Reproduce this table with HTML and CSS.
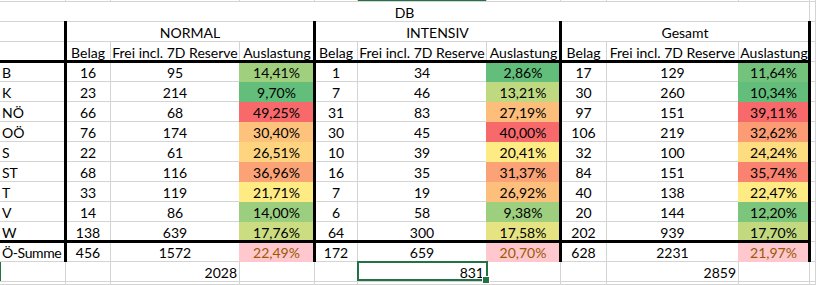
FILE: index.html
```html
<!DOCTYPE html>
<html lang="de">
<head>
<meta charset="utf-8">
<title>DB Auslastung</title>
<link rel="stylesheet" href="styles.css">
</head>
<body>
<div class="sheet">
  <div class="cells">
    <!-- row 0 (partial) -->
    <div class="c"></div><div class="c"></div><div class="c"></div><div class="c"></div><div class="c"></div><div class="c hc"></div><div class="c"></div><div class="c"></div><div class="c"></div><div class="c"></div><div class="c"></div>
    <!-- DB -->
    <div class="c s10">DB</div><div class="c"></div>
    <!-- groups -->
    <div class="c"></div><div class="c s3">NORMAL</div><div class="c s3">INTENSIV</div><div class="c s3">Gesamt</div><div class="c"></div>
    <!-- header -->
    <div class="c"></div>
    <div class="c">Belag</div><div class="c">Frei incl. 7D Reserve</div><div class="c">Auslastung</div>
    <div class="c">Belag</div><div class="c">Frei incl. 7D Reserve</div><div class="c">Auslastung</div>
    <div class="c">Belag</div><div class="c">Frei incl. 7D Reserve</div><div class="c">Auslastung</div>
    <div class="c"></div>

    <div class="c l">B</div>
    <div class="c">16</div><div class="c">95</div><div class="c f" style="background:#A0D07E">14,41%</div>
    <div class="c">1</div><div class="c">34</div><div class="c f" style="background:#63BE7B">2,86%</div>
    <div class="c">17</div><div class="c">129</div><div class="c f" style="background:#74C37C">11,64%</div>
    <div class="c"></div>

    <div class="c l">K</div>
    <div class="c">23</div><div class="c">214</div><div class="c f" style="background:#63BE7B">9,70%</div>
    <div class="c">7</div><div class="c">46</div><div class="c f" style="background:#BFD980">13,21%</div>
    <div class="c">30</div><div class="c">260</div><div class="c f" style="background:#63BE7B">10,34%</div>
    <div class="c"></div>

    <div class="c l">NÖ</div>
    <div class="c">66</div><div class="c">68</div><div class="c f" style="background:#F8696B">49,25%</div>
    <div class="c">31</div><div class="c">83</div><div class="c f" style="background:#FDBE7B">27,19%</div>
    <div class="c">97</div><div class="c">151</div><div class="c f" style="background:#F8696B">39,11%</div>
    <div class="c"></div>

    <div class="c l">OÖ</div>
    <div class="c">76</div><div class="c">174</div><div class="c f" style="background:#FDC27C">30,40%</div>
    <div class="c">30</div><div class="c">45</div><div class="c f" style="background:#F8696B">40,00%</div>
    <div class="c">106</div><div class="c">219</div><div class="c f" style="background:#FB9C75">32,62%</div>
    <div class="c"></div>

    <div class="c l">S</div>
    <div class="c">22</div><div class="c">61</div><div class="c f" style="background:#FED47F">26,51%</div>
    <div class="c">10</div><div class="c">39</div><div class="c f" style="background:#FFEB84">20,41%</div>
    <div class="c">32</div><div class="c">100</div><div class="c f" style="background:#FEDD81">24,24%</div>
    <div class="c"></div>

    <div class="c l">ST</div>
    <div class="c">68</div><div class="c">116</div><div class="c f" style="background:#FBA376">36,96%</div>
    <div class="c">16</div><div class="c">35</div><div class="c f" style="background:#FBA276">31,37%</div>
    <div class="c">84</div><div class="c">151</div><div class="c f" style="background:#F98370">35,74%</div>
    <div class="c"></div>

    <div class="c l">T</div>
    <div class="c">33</div><div class="c">119</div><div class="c f" style="background:#FFEB84">21,71%</div>
    <div class="c">7</div><div class="c">19</div><div class="c f" style="background:#FDC07C">26,92%</div>
    <div class="c">40</div><div class="c">138</div><div class="c f" style="background:#FFEB84">22,47%</div>
    <div class="c"></div>

    <div class="c l">V</div>
    <div class="c">14</div><div class="c">86</div><div class="c f" style="background:#9BCE7E">14,00%</div>
    <div class="c">6</div><div class="c">58</div><div class="c f" style="background:#9DCF7E">9,38%</div>
    <div class="c">20</div><div class="c">144</div><div class="c f" style="background:#7BC57C">12,20%</div>
    <div class="c"></div>

    <div class="c l">W</div>
    <div class="c">138</div><div class="c">639</div><div class="c f" style="background:#CCDC81">17,76%</div>
    <div class="c">64</div><div class="c">300</div><div class="c f" style="background:#E6E482">17,58%</div>
    <div class="c">202</div><div class="c">939</div><div class="c f" style="background:#C2D980">17,70%</div>
    <div class="c"></div>

    <div class="c l tight">Ö-Summe</div>
    <div class="c">456</div><div class="c">1572</div><div class="c f sum">22,49%</div>
    <div class="c">172</div><div class="c">659</div><div class="c f sum">20,70%</div>
    <div class="c">628</div><div class="c">2231</div><div class="c f sum">21,97%</div>
    <div class="c"></div>

    <div class="c hr"></div>
    <div class="c"></div><div class="c r">2028</div><div class="c"></div>
    <div class="c"></div><div class="c r">831</div><div class="c"></div>
    <div class="c"></div><div class="c r">2859</div><div class="c"></div>
    <div class="c"></div>

    <div class="c"></div><div class="c"></div><div class="c"></div><div class="c"></div><div class="c"></div><div class="c"></div><div class="c"></div><div class="c"></div><div class="c"></div><div class="c"></div><div class="c"></div>
  </div>
  <div class="lines">
    <div class="v v1"></div>
    <div class="v v2"></div>
    <div class="v v3"></div>
    <div class="v v4"></div>
    <div class="h h1"></div>
    <div class="h h2"></div>
    <div class="sel"></div>
  </div>
</div>
</body>
</html>
```
FILE: styles.css
```css
* {
  box-sizing: border-box;
  margin: 0;
  padding: 0;
}

html,
body {
  background: #ffffff;
  overflow: hidden;
}

body {
  width: 816px;
  height: 285px;
  font-family: Lato, "Liberation Sans", sans-serif;
  font-size: 14px;
  color: #000000;
}

.sheet {
  display: grid;
}

.cells,
.lines {
  grid-area: 1 / 1;
  display: grid;
  grid-template-columns: 66px 45px 129px 75px 43px 129px 74px 46px 132px 71px 1fr;
  grid-template-rows: 2px repeat(14, 20px) 3px;
}

.lines {
  pointer-events: none;
}

.c {
  border-right: 1px solid #d4d4d4;
  border-bottom: 1px solid #d4d4d4;
  display: flex;
  align-items: flex-end;
  justify-content: center;
  line-height: 17px;
  white-space: nowrap;
  min-width: 0;
}

.l {
  justify-content: flex-start;
  padding-left: 2px;
}

.tight {
  letter-spacing: -0.4px;
}

.r {
  justify-content: flex-end;
  padding-right: 2px;
}

.s3 {
  grid-column: span 3;
}

.s10 {
  grid-column: span 10;
}

.f {
  margin-left: -1px;
  border-right-color: transparent;
  border-bottom-color: transparent;
}

.sum {
  background: #ffc7ce;
  color: #9c5700;
}

.hc {
  background: #217346;
}

.hr {
  box-shadow: inset 1px 0 #217346;
}

.v {
  grid-row: 3 / 15;
  justify-self: start;
  width: 3px;
  margin-left: -2px;
  margin-top: -1px;
  background: #000000;
}

.v1 { grid-column: 2; }
.v2 { grid-column: 5; }
.v3 { grid-column: 8; }
.v4 { grid-column: 11; }

.h {
  grid-column: 1 / 11;
  align-self: start;
  height: 3px;
  margin-top: -2px;
  margin-right: -1px;
  background: #000000;
}

.h1 { grid-row: 5; }
.h2 { grid-row: 14; }

.sel {
  grid-column: 6;
  grid-row: 15;
  margin: -1px -1px 1px -1px;
  border: 2px solid #217346;
  position: relative;
}

.sel::after {
  content: "";
  position: absolute;
  right: -4px;
  bottom: -5px;
  width: 6px;
  height: 6px;
  background: #217346;
  border: 1px solid #ffffff;
}
```
